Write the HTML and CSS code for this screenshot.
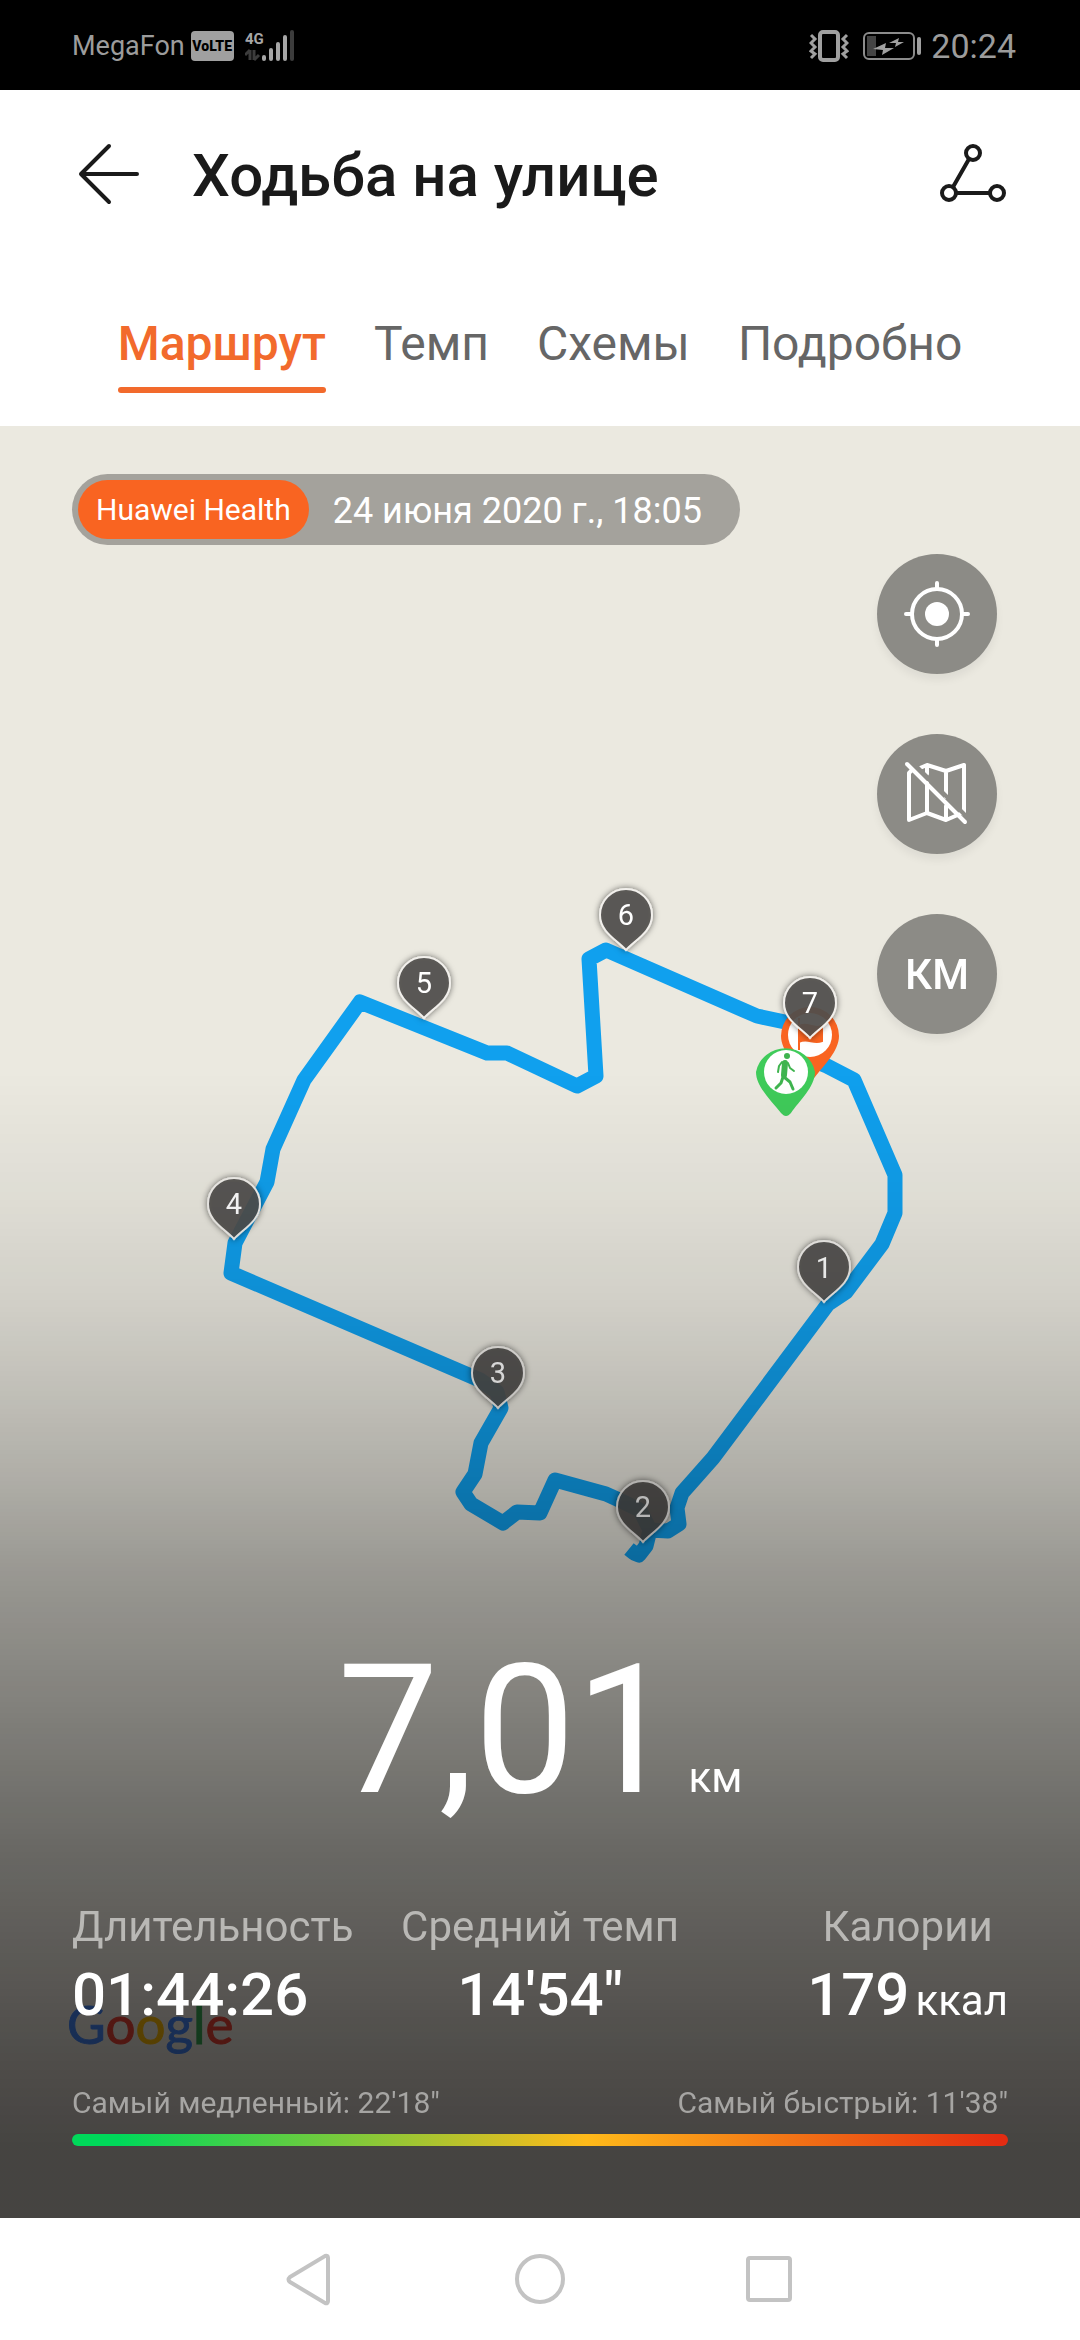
FILE: index.html
```html
<!DOCTYPE html>
<html lang="ru">
<head>
<meta charset="utf-8">
<meta name="viewport" content="width=device-width, initial-scale=1">
<title>Ходьба на улице</title>
<link rel="stylesheet" href="styles.css">
</head>
<body>
<div class="status">
  <div class="status-side">
    <span class="carrier">MegaFon</span>
    <span class="volte">VoLTE</span>
    <svg class="signal" width="50" height="34" viewBox="0 0 50 34" aria-hidden="true">
      <text class="signal-text" x="0" y="15">4G</text>
      <path d="M5 21v10M0 26l5-5M9 21v10M9 31l5-5" stroke="#3c3c3c" stroke-width="3" fill="none"/>
      <g stroke="#a6a6a6" stroke-width="4" stroke-linecap="round">
        <path d="M19 28v2M26 21v9M33 15v15M40 8v22"/>
        <path d="M47 3v27" stroke="#3c3c3c"/>
      </g>
    </svg>
  </div>
  <div class="status-side">
    <svg width="40" height="34" viewBox="0 0 40 34" fill="none" stroke="#a0a0a0" stroke-width="3" aria-hidden="true">
      <rect x="11" y="3" width="18" height="28" rx="3" stroke-width="4"/>
      <path d="M2 6l4 4-4 4 4 4-4 4 4 3-4 4M38 6l-4 4 4 4-4 4 4 4-4 3 4 4"/>
    </svg>
    <svg width="60" height="30" viewBox="0 0 60 30" fill="none" aria-hidden="true">
      <rect x="1" y="2" width="50" height="26" rx="5" stroke="#8c8c8c" stroke-width="2"/>
      <rect x="4" y="5" width="9" height="20" fill="#444"/>
      <path d="M56 8v14" stroke="#a0a0a0" stroke-width="4" stroke-linecap="round"/>
      <path d="M10 18l13-6-1 5h9l-12 7 1-5zM26 12l10-5-1 4h6l-9 5 1-4z" fill="#a0a0a0"/>
    </svg>
    <time class="clock">20:24</time>
  </div>
</div>

<header class="header">
  <button class="icon-button" aria-label="Назад">
    <svg width="64" height="64" viewBox="0 0 64 64" fill="none" stroke="#1a1a1a" stroke-width="4" stroke-linecap="round" stroke-linejoin="round"><path d="M34 4L6 32l28 28M6 32h56"/></svg>
  </button>
  <h1 class="title">Ходьба на улице</h1>
  <button class="icon-button" aria-label="Поделиться">
    <svg width="68" height="64" viewBox="0 0 68 64" fill="none" stroke="#1a1a1a" stroke-width="4"><circle cx="34" cy="11" r="7"/><circle cx="10" cy="51" r="7"/><circle cx="58" cy="51" r="7"/><path d="M30 17L14 45M17 51h34"/></svg>
  </button>
</header>

<nav class="tabs">
  <a class="tab tab-active" href="#route" aria-current="page">Маршрут</a>
  <a class="tab" href="#pace">Темп</a>
  <a class="tab" href="#charts">Схемы</a>
  <a class="tab" href="#details">Подробно</a>
</nav>

<main class="map" id="route">
  <svg class="map-canvas" viewBox="0 426 1080 1791" preserveAspectRatio="xMidYMin meet" aria-label="Карта маршрута">
    <defs>
      <filter id="shadow" x="-30%" y="-30%" width="160%" height="160%"><feDropShadow dx="0" dy="0" stdDeviation="3" flood-opacity=".6"/></filter>
      <g id="pin">
        <path d="M0 35C-9 25-26 17-26 0a26 26 0 0 1 52 0C26 17 9 25 0 35Z" fill="#52504e" fill-opacity=".88" stroke="#f2f0ec" stroke-width="2"/>
      </g>
    </defs>
    <path class="track" d="M810 1059L827 1066L854 1080L895 1175V1213L882 1244L846 1292L828 1304L713 1458L682 1493L677 1508L679 1524L668 1531L650 1530L646 1546L639 1555L634 1553L629 1549M650 1530L640 1510L617 1499L606 1494L555 1480L540 1513L517 1512L503 1523L471 1504L463 1492L475 1474L481 1443L501 1408L497 1392L480 1380L231 1273L235 1243L267 1182L273 1149L304 1080L360 1002L487 1053L507 1053L577 1086L596 1076L589 959L606 950L757 1016L785 1022L820 1024L830 1020"/>
    <g>
      <path d="M810 1080c-2 0-3-1-5-3-9-12-24-26-24-41a29 29 0 0 1 58 0c0 15-15 29-24 41-2 2-3 3-5 3Z" fill="#f96421"/>
      <circle cx="810" cy="1035" r="22" fill="#fff"/>
      <path d="M799 1018v32M799 1026c8-5 14 4 23 0v15c-9 4-14-4-23 1z" fill="#f96421" stroke="#f96421" stroke-width="2"/>
    </g>
    <g>
      <path d="M786 1116c-2 0-3-1-5-3-9-12-25-26-25-41a30 29 0 0 1 59 0c0 15-16 29-24 41-2 2-3 3-5 3Z" fill="#3fcb5a"/>
      <circle cx="786" cy="1072" r="22" fill="#fff"/>
      <g fill="none" stroke="#3fb44f" stroke-linecap="round" stroke-linejoin="round">
        <circle cx="787" cy="1056" r="3" fill="#3fb44f" stroke="none"/>
        <path d="M785 1063L784 1075" stroke-width="6"/>
        <path d="M784 1077l6 5 3 7M783 1077l-2 6-5 5" stroke-width="3"/>
        <path d="M782 1062l-3 4-1 6M788 1063l2 5 4 3" stroke-width="2"/>
      </g>
    </g>
    <g filter="url(#shadow)">
      <use href="#pin" x="824" y="1267"/><use href="#pin" x="643" y="1507"/><use href="#pin" x="498" y="1373"/><use href="#pin" x="234" y="1204"/><use href="#pin" x="424" y="983"/><use href="#pin" x="626" y="915"/><use href="#pin" x="810" y="1003"/>
    </g>
    <g class="pin-label">
      <text x="824" y="1278">1</text><text x="643" y="1517">2</text><text x="498" y="1383">3</text><text x="234" y="1214">4</text><text x="424" y="993">5</text><text x="626" y="925">6</text><text x="810" y="1013">7</text>
    </g>
    <text class="attribution" x="67" y="2044"><tspan class="blue">G</tspan><tspan class="red">o</tspan><tspan class="yellow">o</tspan><tspan class="blue">g</tspan><tspan class="green">l</tspan><tspan class="red">e</tspan></text>
  </svg>
  <div class="map-shade"></div>

  <div class="overlay">
    <div class="chip">
      <span class="chip-source">Huawei Health</span>
      <time class="chip-date">24 июня 2020 г., 18:05</time>
    </div>
    <div class="controls">
      <button class="round" aria-label="Центрировать">
        <svg width="72" height="72" viewBox="0 0 72 72" fill="none" stroke="#fff" stroke-width="4" stroke-linecap="round"><circle cx="36" cy="36" r="25"/><circle cx="36" cy="36" r="12" fill="#fff" stroke="none"/><path d="M36 5v6M36 61v6M5 36h6M61 36h6"/></svg>
      </button>
      <button class="round" aria-label="Скрыть карту">
        <svg width="72" height="72" viewBox="0 0 72 72" fill="none" stroke="#fff" stroke-width="4" stroke-linecap="round" stroke-linejoin="round"><path d="M11 12l-3 3v47l18-7 19 7 14-6M19 10l7-3 19 6 18-6v49M26 8v8M26 25v30M45 13v26M45 48v14"/><path d="M10 9l53 53" stroke="#8c8b86" stroke-linecap="butt" transform="translate(3 -3)"/><path d="M6 6l58 58"/></svg>
      </button>
      <button class="round">КМ</button>
    </div>

    <section class="summary">
      <p class="distance">7,01<span class="distance-unit">км</span></p>
      <dl class="stats">
        <div class="stat"><dt class="stat-label">Длительность</dt><dd class="stat-value stat-start">01:44:26</dd></div>
        <div class="stat"><dt class="stat-label">Средний темп</dt><dd class="stat-value">14'54"</dd></div>
        <div class="stat stat-end"><dt class="stat-label">Калории</dt><dd class="stat-value">179<span class="stat-unit">ккал</span></dd></div>
      </dl>
      <div class="pace">
        <span>Самый медленный: 22'18"</span>
        <span>Самый быстрый: 11'38"</span>
      </div>
      <div class="pace-bar"></div>
    </section>
  </div>
</main>

<nav class="system-nav">
  <button class="icon-button" aria-label="Назад"><svg width="60" height="60" viewBox="0 0 60 60" class="nav-icon"><path d="M10 28L45 7q3-1 3 2v43q0 3-3 2L10 33q-3-2 0-5Z"/></svg></button>
  <button class="icon-button" aria-label="Домой"><svg width="60" height="60" viewBox="0 0 60 60" class="nav-icon"><circle cx="30" cy="30" r="23"/></svg></button>
  <button class="icon-button" aria-label="Недавние"><svg width="60" height="60" viewBox="0 0 60 60" class="nav-icon"><rect x="8" y="9" width="42" height="42" rx="2"/></svg></button>
</nav>
</body>
</html>
```
FILE: styles.css
```css
* {
  box-sizing: border-box;
}

body {
  margin: 0;
  min-height: 100vh;
  display: flex;
  flex-direction: column;
  background: #fff;
  color: #1a1a1a;
  font-family: Roboto, "Noto Sans", sans-serif;
}

button {
  border: 0;
  padding: 0;
  background: none;
  font-family: inherit;
}

svg {
  display: block;
}

h1, p, dl, dd {
  margin: 0;
}

.status {
  display: flex;
  justify-content: space-between;
  align-items: center;
  height: 90px;
  padding: 2px 64px 0 72px;
  background: #000;
  color: #9c9c9c;
}

.status-side {
  display: flex;
  align-items: center;
}

.status-side > svg + svg {
  margin-left: 14px;
}

.carrier {
  font-size: 27px;
}

.volte {
  margin: 0 11px 0 6px;
  width: 43px;
  border-radius: 4px;
  background: #a0a0a0;
  color: #000;
  font-size: 14px;
  font-weight: 900;
  line-height: 30px;
  text-align: center;
}

.signal-text {
  fill: #a6a6a6;
  font-size: 15px;
  font-weight: 700;
}

.clock {
  margin-left: 8px;
  font-size: 34px;
}

.header {
  display: flex;
  align-items: center;
  height: 168px;
  padding: 0 73px 0 75px;
}

.title {
  flex: 1;
  padding-top: 4px;
  margin-left: 53px;
  font-size: 60px;
  font-weight: 500;
  line-height: 72px;
}

.tabs {
  display: flex;
  justify-content: center;
  gap: 48px;
  padding: 54px 0 33px;
}

.tab {
  color: #666;
  font-size: 48px;
  line-height: 64px;
  text-decoration: none;
}

.tab::after {
  content: "";
  display: block;
  height: 6px;
  margin-top: 11px;
  border-radius: 3px;
}

.tab-active {
  color: #f26a2c;
  font-weight: 500;
}

.tab-active::after {
  background: #f26a2c;
}

.map {
  flex: 1;
  display: flex;
  position: relative;
  background: #ebe9e0;
}

.map-canvas {
  position: absolute;
  inset: 0;
  width: 100%;
  height: 100%;
}

.track {
  fill: none;
  stroke: #10a0ee;
  stroke-width: 15px;
  stroke-linejoin: round;
}

.pin-label {
  fill: #fff;
  font-size: 29px;
  text-anchor: middle;
}

.attribution {
  font-family: Lato, sans-serif;
  font-size: 53px;
  stroke-width: 1px;
}

.blue {
  fill: #4285f4;
  stroke: #4285f4;
}

.red {
  fill: #ea4335;
  stroke: #ea4335;
}

.yellow {
  fill: #fbbc05;
  stroke: #fbbc05;
}

.green {
  fill: #34a853;
  stroke: #34a853;
}

.map-shade {
  position: absolute;
  inset: 0;
  background: linear-gradient(
    rgba(0, 0, 0, 0) 36%,
    rgba(0, 0, 0, 0.05) 43%,
    rgba(0, 0, 0, 0.11) 49%,
    rgba(0, 0, 0, 0.18) 54%,
    rgba(0, 0, 0, 0.26) 59%,
    rgba(0, 0, 0, 0.35) 64%,
    rgba(0, 0, 0, 0.55) 79%,
    rgba(2, 0, 0, 0.61) 85%,
    rgba(2, 0, 0, 0.67) 91%,
    rgba(2, 0, 0, 0.71) 96%
  );
}

.overlay {
  position: relative;
  flex: 1;
  display: flex;
  flex-direction: column;
  padding: 48px 72px 72px;
}

.chip {
  align-self: flex-start;
  display: flex;
  align-items: center;
  padding: 6px;
  border-radius: 36px;
  background: #a4a29c;
  color: #fff;
}

.chip-source {
  padding: 1px 18px 0;
  border-radius: 30px;
  background: #f96421;
  font-size: 30px;
  line-height: 58px;
}

.chip-date {
  padding: 3px 32px 0 24px;
  font-size: 36px;
}

.controls {
  align-self: flex-end;
  display: flex;
  flex-direction: column;
  gap: 60px;
  margin: 9px 11px 0 0;
}

.round {
  display: flex;
  align-items: center;
  justify-content: center;
  width: 120px;
  height: 120px;
  border-radius: 50%;
  background: #8c8b86;
  box-shadow: 0 6px 8px rgba(0, 0, 0, 0.06);
  color: #fff;
  font-size: 42px;
  font-weight: 500;
}

.summary {
  margin-top: auto;
  color: #fff;
}

.distance {
  font-size: 180px;
  line-height: 180px;
  text-align: center;
}

.distance-unit {
  margin-left: 12px;
  font-size: 42px;
  line-height: 42px;
}

.stats {
  display: grid;
  grid-template-columns: 1fr auto 1fr;
  margin: 78px 0 48px;
}

.stat {
  justify-self: start;
  text-align: center;
}

.stat-end {
  justify-self: end;
}

.stat-label {
  color: #b9b8b5;
  font-size: 42px;
  line-height: 56px;
}

.stat-value {
  font-size: 60px;
  font-weight: 500;
  line-height: 80px;
}

.stat-start {
  text-align: left;
}

.stat-unit {
  margin-left: 6px;
  font-size: 42px;
  font-weight: 400;
  line-height: 42px;
}

.pace {
  display: flex;
  justify-content: space-between;
  color: #a6a5a3;
  font-size: 30px;
  line-height: 40px;
}

.pace-bar {
  height: 12px;
  margin-top: 11px;
  border-radius: 6px;
  background: linear-gradient(90deg, #00d95a 5%, #ffba1a 55%, #e42c12 99%);
}

.system-nav {
  display: flex;
  align-items: center;
  justify-content: center;
  gap: 170px;
  height: 122px;
}

.nav-icon {
  fill: none;
  stroke: #c3c3c3;
  stroke-width: 4px;
}
```
